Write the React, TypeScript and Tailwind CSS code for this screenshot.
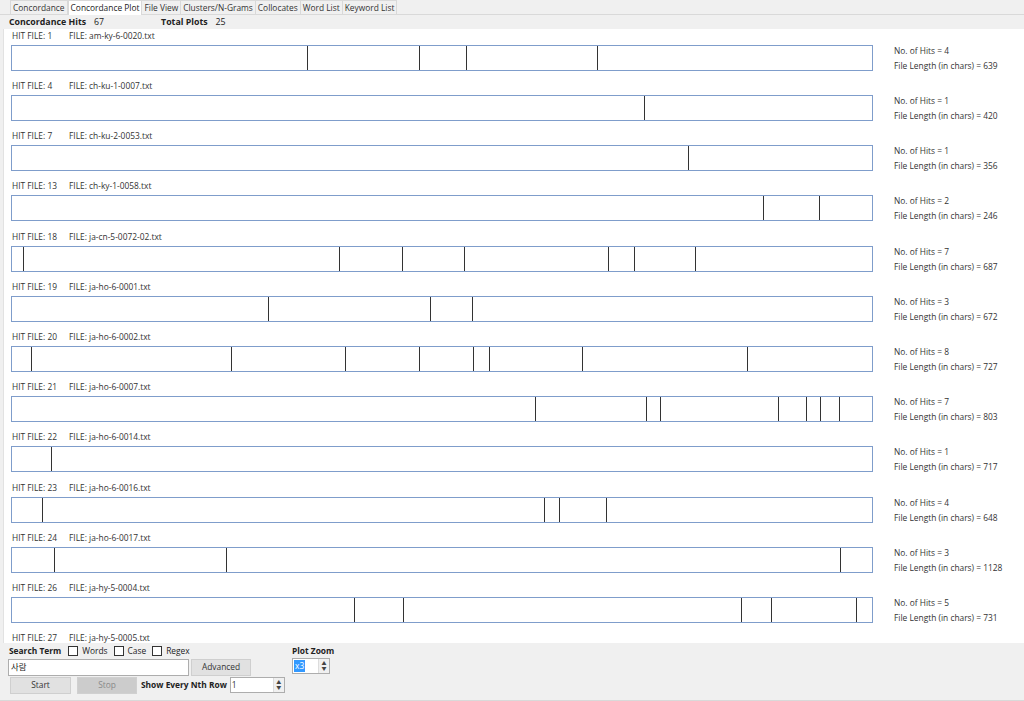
import React from "react";

type Plot = { hit: number; file: string; len: number; marks: number[] };

// x positions taken from the screenshot (page coords), rect starts at x=11
const plots: Plot[] = [
  { hit: 1, file: "am-ky-6-0020.txt", len: 639, marks: [307, 419, 466, 597] },
  { hit: 4, file: "ch-ku-1-0007.txt", len: 420, marks: [644] },
  { hit: 7, file: "ch-ku-2-0053.txt", len: 356, marks: [688] },
  { hit: 13, file: "ch-ky-1-0058.txt", len: 246, marks: [763, 819] },
  { hit: 18, file: "ja-cn-5-0072-02.txt", len: 687, marks: [23, 339, 402, 464, 608, 634, 695] },
  { hit: 19, file: "ja-ho-6-0001.txt", len: 672, marks: [268, 430, 472] },
  { hit: 20, file: "ja-ho-6-0002.txt", len: 727, marks: [31, 231, 345, 419, 473, 489, 582, 747] },
  { hit: 21, file: "ja-ho-6-0007.txt", len: 803, marks: [535, 646, 660, 778, 806, 820, 839] },
  { hit: 22, file: "ja-ho-6-0014.txt", len: 717, marks: [51] },
  { hit: 23, file: "ja-ho-6-0016.txt", len: 648, marks: [42, 544, 559, 606] },
  { hit: 24, file: "ja-ho-6-0017.txt", len: 1128, marks: [54, 226, 840] },
  { hit: 26, file: "ja-hy-5-0004.txt", len: 731, marks: [354, 403, 741, 771, 856] },
  { hit: 27, file: "ja-hy-5-0005.txt", len: 702, marks: [120, 410, 650] },
];

const tabs = ["Concordance", "Concordance Plot", "File View", "Clusters/N-Grams", "Collocates", "Word List", "Keyword List"];

function Spinner({ value, width, selected }: { value: string; width: string; selected?: boolean }) {
  return (
    <div className={`flex h-[16px] ${width} items-stretch border border-[#adadad] bg-white`}>
      <div className="flex flex-1 items-center pl-[1px]">
        <span className={selected ? "bg-[#3399ff] px-[1px] leading-[12px] text-white" : "leading-[12px] text-[#333]"}>{value}</span>
      </div>
      <div className="flex w-[11px] flex-col items-center justify-center border-l border-[#dcdcdc] bg-[#f0f0f0] text-[5px] leading-[5px] text-[#444]">
        <span>▲</span>
        <span>▼</span>
      </div>
    </div>
  );
}

function Check({ label }: { label: string }) {
  return (
    <label className="flex items-center gap-[4px]">
      <span className="inline-block h-[10px] w-[10px] border border-[#333] bg-white" />
      <span>{label}</span>
    </label>
  );
}

export default function App() {
  return (
    <div
      className="flex h-[701px] w-[1024px] flex-col overflow-hidden bg-[#f0f0f0] text-[8.4px] text-[#222]"
      style={{ fontFamily: '"Open Sans", "Noto Sans CJK KR", sans-serif' }}
    >
      {/* tab strip */}
      <div className="flex h-[15px] items-end border-b border-[#d9d9d9] pl-[10px]">
        {tabs.map((t) =>
          t === "Concordance Plot" ? (
            <div key={t} className="-mb-px h-[15px] border border-b-0 border-[#d9d9d9] bg-white px-[2px] leading-[14px] text-[#222]">
              {t}
            </div>
          ) : (
            <div key={t} className="h-[14px] border border-b-0 border-l-0 border-[#d9d9d9] px-[2px] leading-[13px] text-[#333] first:border-l">
              {t}
            </div>
          )
        )}
      </div>

      {/* summary line */}
      <div className="flex h-[14px] items-center pl-[9px] leading-[14px] text-[8.8px]">
        <span className="font-bold">Concordance Hits</span>
        <span className="ml-[8px] w-[67px]">67</span>
        <span className="font-bold">Total Plots</span>
        <span className="ml-[8px]">25</span>
      </div>

      {/* plot panel */}
      <div className="ml-[3px] h-[614px] overflow-hidden border-l border-[#e2e2e2] bg-white">
        {plots.map((p, i) => (
          <div key={p.hit} className={i === 3 || i === 8 ? "h-[51px]" : "h-[50px]"}>
            <div className="h-[14px] pl-[8px] leading-[14px] text-[#333]">
              <span className="inline-block w-[57px]">HIT FILE: {p.hit}</span>
              <span>FILE: {p.file}</span>
            </div>
            <div className="flex items-center">
              <div className="relative ml-[7px] h-[26px] w-[862px] border border-[#7f9dcb] bg-white">
                {p.marks.map((x) => (
                  <div key={x} className="absolute top-0 h-full w-px bg-[#333]" style={{ left: x - 12 }} />
                ))}
              </div>
              <div className="ml-[21px] leading-[15px] text-[#333]">
                <div>No. of Hits = {p.marks.length}</div>
                <div>File Length (in chars) = {p.len}</div>
              </div>
            </div>
          </div>
        ))}
      </div>

      {/* controls */}
      <div className="flex flex-1 flex-col border-b border-[#d9d9d9] px-[8px] pt-[1px]">
        <div className="flex">
          <div className="flex flex-col">
            <div className="flex h-[14px] items-center gap-[6px] pl-[1px]">
              <span className="mr-[1px] font-bold">Search Term</span>
              <Check label="Words" />
              <Check label="Case" />
              <Check label="Regex" />
            </div>
            <div className="flex h-[18px] items-center">
              <div className="flex h-[17px] w-[181px] items-center border border-[#adadad] bg-white pl-[2px] text-[#222]">사람</div>
              <button className="ml-[2px] h-[17px] w-[60px] border border-[#cfcfcf] bg-[#e1e1e1] text-[#333]">Advanced</button>
            </div>
          </div>
          <div className="ml-[41px] flex flex-col">
            <div className="h-[14px] font-bold leading-[14px]">Plot Zoom</div>
            <div>
              <Spinner value="x3" width="w-[38px]" selected />
            </div>
          </div>
        </div>
        <div className="flex h-[18px] items-center">
          <button className="ml-[2px] h-[17px] w-[61px] border border-[#cfcfcf] bg-[#e1e1e1] text-[#333]">Start</button>
          <button className="ml-[6px] h-[17px] w-[60px] border border-[#d0d0d0] bg-[#cccccc] text-[#8a8a8a]">Stop</button>
          <span className="ml-[4px] font-bold">Show Every Nth Row</span>
          <div className="ml-[3px]">
            <Spinner value="1" width="w-[55px]" />
          </div>
        </div>
      </div>
    </div>
  );
}
